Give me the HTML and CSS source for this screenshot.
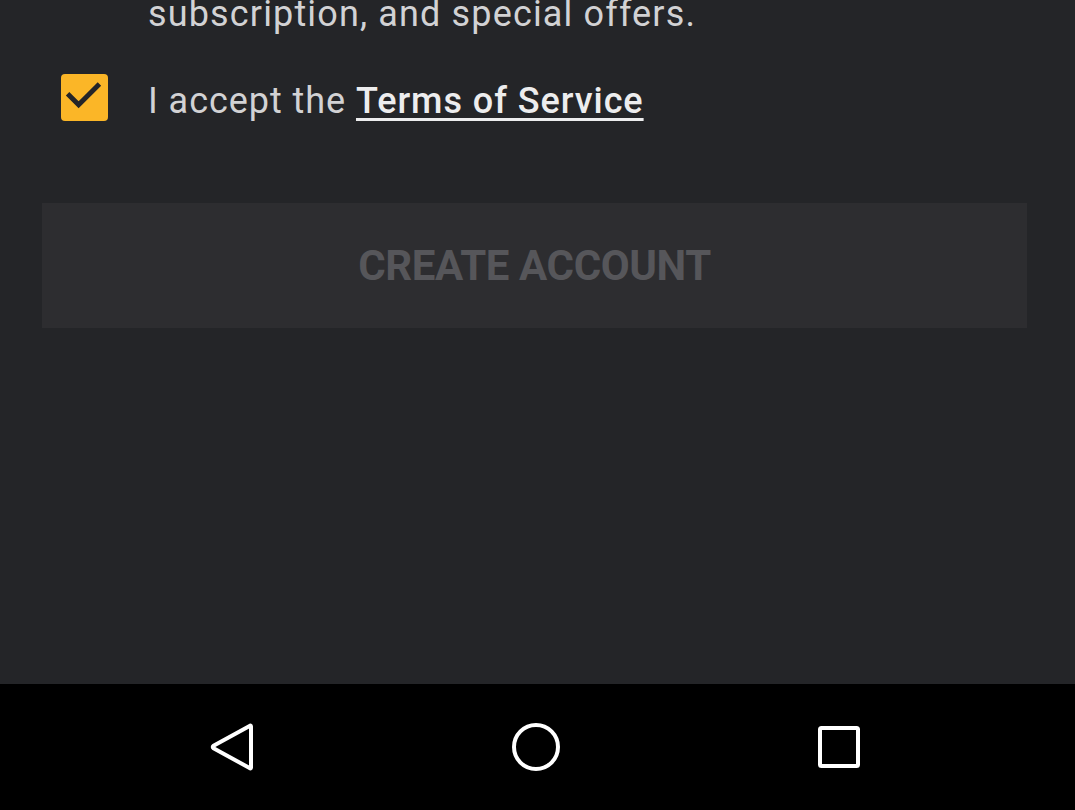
FILE: index.html
```html
<!DOCTYPE html>
<html>
<head>
<meta charset="utf-8">
<link rel="stylesheet" href="styles.css">
</head>
<body>
<div class="screen">
  <main class="content">
    <p class="intro">subscription, and special offers.</p>
    <label class="terms">
      <span class="checkbox">
        <svg viewBox="0 0 48 48" width="47" height="47"><path d="M8.5 22 L18 31.5 L37.5 12" fill="none" stroke="#242528" stroke-width="5" stroke-linecap="square"/></svg>
      </span>
      <span class="terms-text">I accept the <a class="terms-link">Terms of Service</a></span>
    </label>
    <button class="create">CREATE ACCOUNT</button>
  </main>
  <nav class="navbar">
    <span class="nav-btn">
      <svg viewBox="0 0 48 48" width="48" height="48"><path d="M42 3.5 L42 44.5 Q42 46 40.6 45 L4.5 25.3 Q3 24 4.5 22.7 L40.6 3 Q42 2 42 3.5 Z" fill="none" stroke="#fff" stroke-width="4" stroke-linejoin="round"/></svg>
    </span>
    <span class="nav-btn">
      <svg viewBox="0 0 48 48" width="48" height="48"><circle cx="24" cy="24" r="22" fill="none" stroke="#fff" stroke-width="4"/></svg>
    </span>
    <span class="nav-btn">
      <svg viewBox="0 0 48 48" width="48" height="48"><rect x="5" y="5" width="38" height="38" rx="1.5" fill="none" stroke="#fff" stroke-width="4"/></svg>
    </span>
  </nav>
</div>
</body>
</html>
```
FILE: styles.css
```css
html, body {
  margin: 0;
  padding: 0;
  background: #242528;
}
.screen {
  width: 1075px;
  height: 810px;
  display: flex;
  flex-direction: column;
  font-family: Roboto, "Noto Sans", sans-serif;
  overflow: hidden;
}
.content {
  flex: 1;
  display: flex;
  flex-direction: column;
  background: #242528;
}
.intro {
  margin: -11px 0 0 148px;
  font-size: 36px;
  line-height: 50px;
  color: #d2d2d4;
  letter-spacing: 1.15px;
}
.terms {
  display: flex;
  align-items: center;
  margin: 34px 0 0 61px;
  height: 48px;
}
.checkbox {
  width: 47px;
  height: 47px;
  border-radius: 4px;
  background: #fbb627;
  display: flex;
  align-items: center;
  justify-content: center;
}
.checkbox svg { display: block; }
.terms-text {
  margin-left: 40px;
  font-size: 36px;
  color: #d2d2d4;
  letter-spacing: 0.95px;
  position: relative;
  top: 4px;
}
.terms-link {
  color: #ededee;
  font-weight: 500;
  text-decoration: underline;
  text-decoration-thickness: 3px;
  text-underline-offset: 5px;
}
.create {
  margin: 82px 0 0 42px;
  width: 985px;
  height: 125px;
  border: none;
  background: #2d2d30;
  color: #56565a;
  font-family: Roboto, "Noto Sans", sans-serif;
  font-weight: 700;
  font-size: 42px;
  letter-spacing: -0.4px;
  padding: 0;
}
.navbar {
  height: 126px;
  background: #000;
  display: flex;
  align-items: center;
  justify-content: center;
  gap: 255px;
  padding-right: 4px;
}
.nav-btn {
  width: 48px;
  height: 48px;
  display: flex;
}
.nav-btn svg { display: block; }
```
